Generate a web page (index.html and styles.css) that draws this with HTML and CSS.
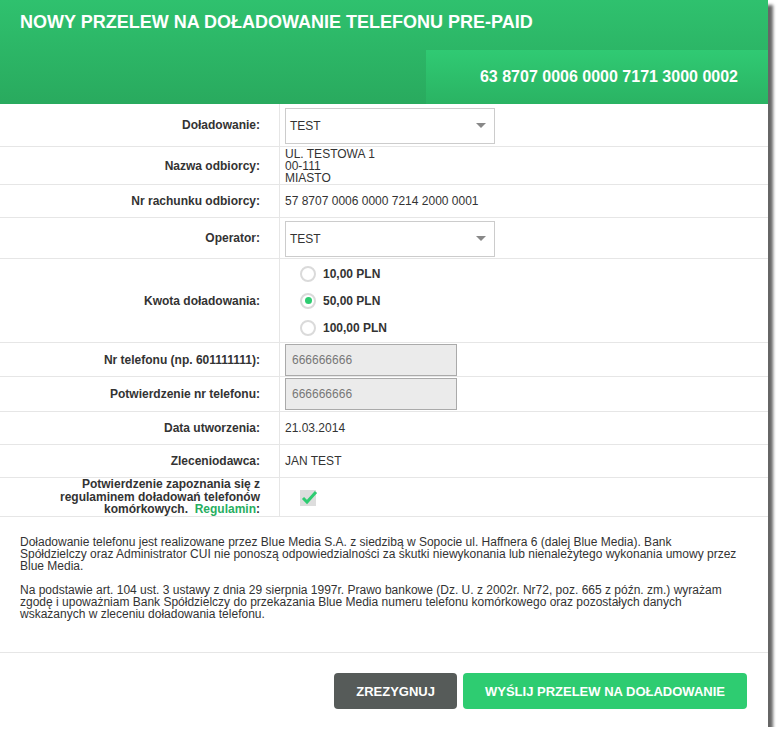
FILE: index.html
```html
<!DOCTYPE html>
<html lang="pl">
<head>
    <meta charset="UTF-8">
    <meta name="viewport" content="width=device-width, initial-scale=1.0">
    <title>Nowy przelew na doładowanie telefonu pre-paid</title>
    <link rel="stylesheet" href="styles.css">
</head>
<body>

    <div class="panel">
        <div class="panel-header">
            <h1>NOWY PRZELEW NA DOŁADOWANIE TELEFONU PRE-PAID</h1>
            <div class="account">63 8707 0006 0000 7171 3000 0002</div>
        </div>

        <div class="form-table">
            <div class="form-row row-1">
                <div class="label">Doładowanie:</div>
                <div class="value">
                    <div class="select">TEST<span class="arrow"></span></div>
                </div>
            </div>
            <div class="form-row row-2">
                <div class="label">Nazwa odbiorcy:</div>
                <div class="value">UL. TESTOWA 1<br>00-111<br>MIASTO</div>
            </div>
            <div class="form-row row-3">
                <div class="label">Nr rachunku odbiorcy:</div>
                <div class="value">57 8707 0006 0000 7214 2000 0001</div>
            </div>
            <div class="form-row row-4">
                <div class="label">Operator:</div>
                <div class="value">
                    <div class="select">TEST<span class="arrow"></span></div>
                </div>
            </div>
            <div class="form-row row-5">
                <div class="label">Kwota doładowania:</div>
                <div class="value radios">
                    <label class="radio"><span class="circle"></span>10,00 PLN</label>
                    <label class="radio"><span class="circle checked"></span>50,00 PLN</label>
                    <label class="radio"><span class="circle"></span>100,00 PLN</label>
                </div>
            </div>
            <div class="form-row row-6">
                <div class="label">Nr telefonu (np. 601111111):</div>
                <div class="value"><div class="input">666666666</div></div>
            </div>
            <div class="form-row row-7">
                <div class="label">Potwierdzenie nr telefonu:</div>
                <div class="value"><div class="input">666666666</div></div>
            </div>
            <div class="form-row row-8">
                <div class="label">Data utworzenia:</div>
                <div class="value">21.03.2014</div>
            </div>
            <div class="form-row row-9">
                <div class="label">Zleceniodawca:</div>
                <div class="value">JAN TEST</div>
            </div>
            <div class="form-row row-10">
                <div class="label multi">
                    <span>Potwierdzenie zapoznania się z<br>regulaminem doładowań telefonów<br>komórkowych.&nbsp; <a href="#">Regulamin</a>:</span>
                </div>
                <div class="value">
                    <svg class="checkbox" width="18" height="18" viewBox="0 0 18 18">
                        <rect x="0" y="2" width="16" height="16" fill="#dddddd"/>
                        <polyline points="3,10 7,14 16,4" fill="none" stroke="#2ecc71" stroke-width="3"/>
                    </svg>
                </div>
            </div>
        </div>

        <div class="notice">
            <p>Doładowanie telefonu jest realizowane przez Blue Media S.A. z siedzibą w Sopocie ul. Haffnera 6 (dalej Blue Media). Bank<br>Spółdzielczy oraz Administrator CUI nie ponoszą odpowiedzialności za skutki niewykonania lub nienależytego wykonania umowy przez<br>Blue Media.</p>
            <p>Na podstawie art. 104 ust. 3 ustawy z dnia 29 sierpnia 1997r. Prawo bankowe (Dz. U. z 2002r. Nr72, poz. 665 z późn. zm.) wyrażam<br>zgodę i upoważniam Bank Spółdzielczy do przekazania Blue Media numeru telefonu komórkowego oraz pozostałych danych<br>wskazanych w zleceniu doładowania telefonu.</p>
        </div>

        <div class="actions">
            <button class="btn btn-cancel">ZREZYGNUJ</button>
            <button class="btn btn-send">WYŚLIJ PRZELEW NA DOŁADOWANIE</button>
        </div>
    </div>

</body>
</html>
```

FILE: styles.css
```css
body {
    margin: 0;
    background-color: #ffffff;
    font-family: "Liberation Sans", Arial, sans-serif;
    font-size: 12px;
    color: #333;
}
.panel {
    width: 768px;
    background-color: #ffffff;
    box-shadow: 5px 5px 3px rgba(0, 0, 0, 0.6);
}
.panel-header {
    height: 104px;
    display: flex;
    flex-direction: column;
    background: linear-gradient(to bottom, #2fc16e, #29aa5e);
}
.panel-header h1 {
    margin: 0;
    padding: 12px 20px 0;
    font-size: 18px;
    line-height: 20px;
    font-weight: bold;
    color: #ffffff;
}
.account {
    margin-top: auto;
    align-self: flex-end;
    width: 342px;
    height: 54px;
    line-height: 54px;
    box-sizing: border-box;
    padding-right: 30px;
    text-align: right;
    font-size: 16px;
    font-weight: bold;
    color: #ffffff;
    background: linear-gradient(to bottom, #30ca73, #2ab363);
}
.form-row {
    display: flex;
    box-sizing: border-box;
    border-bottom: 1px solid #e6e6e6;
    line-height: 12px;
}
.row-1 { height: 43px; }
.row-2 { height: 38px; }
.row-3 { height: 33px; }
.row-4 { height: 41px; }
.row-5 { height: 84px; }
.row-6 { height: 34px; }
.row-7 { height: 35px; }
.row-8 { height: 33px; }
.row-9 { height: 33px; }
.row-10 { height: 39px; }
.label {
    width: 280px;
    flex-shrink: 0;
    box-sizing: border-box;
    padding-right: 19px;
    border-right: 1px solid #e6e6e6;
    display: flex;
    align-items: center;
    justify-content: flex-end;
    text-align: right;
    font-weight: bold;
}
.label.multi {
    line-height: 12.5px;
}
.label a {
    color: #27ae60;
    text-decoration: none;
}
.value {
    flex: 1;
    padding-left: 5px;
    display: flex;
    flex-direction: column;
    justify-content: center;
}
.select {
    width: 210px;
    height: 36px;
    box-sizing: border-box;
    border: 1px solid #cccccc;
    padding: 0 8px 0 4px;
    display: flex;
    align-items: center;
    margin-top: 1px;
}
.arrow {
    margin-left: auto;
    width: 0;
    height: 0;
    border-left: 5px solid transparent;
    border-right: 5px solid transparent;
    border-top: 5px solid #888888;
}
.radios {
    justify-content: center;
}
.radio {
    height: 27px;
    display: flex;
    align-items: center;
    font-weight: bold;
    padding-left: 15px;
}
.circle {
    width: 16px;
    height: 16px;
    box-sizing: border-box;
    border: 2px solid #dadada;
    border-radius: 50%;
    margin-right: 7px;
    display: flex;
    align-items: center;
    justify-content: center;
}
.circle.checked::after {
    content: "";
    width: 7px;
    height: 7px;
    border-radius: 50%;
    background-color: #2ecc71;
}
.input {
    width: 172px;
    height: 32px;
    box-sizing: border-box;
    border: 1px solid #aaaaaa;
    background-color: #ebebeb;
    color: #777777;
    padding-left: 6px;
    display: flex;
    align-items: center;
}
.checkbox {
    margin-left: 15px;
    margin-top: -1px;
}
.notice {
    padding: 19px 20px 32px;
    border-bottom: 1px solid #e6e6e6;
    line-height: 12px;
}
.notice p {
    margin: 0 0 12px;
    white-space: nowrap;
}
.notice p:last-child {
    margin-bottom: 0;
}
.actions {
    display: flex;
    justify-content: flex-end;
    gap: 6px;
    padding: 20px 21px 18px;
}
.btn {
    height: 36px;
    padding: 0 22px;
    border: none;
    border-radius: 4px;
    font-family: "Liberation Sans", Arial, sans-serif;
    font-size: 13px;
    font-weight: bold;
    color: #ffffff;
    cursor: pointer;
}
.btn-cancel {
    background-color: #565b59;
}
.btn-send {
    background-color: #2ecc71;
}
```
